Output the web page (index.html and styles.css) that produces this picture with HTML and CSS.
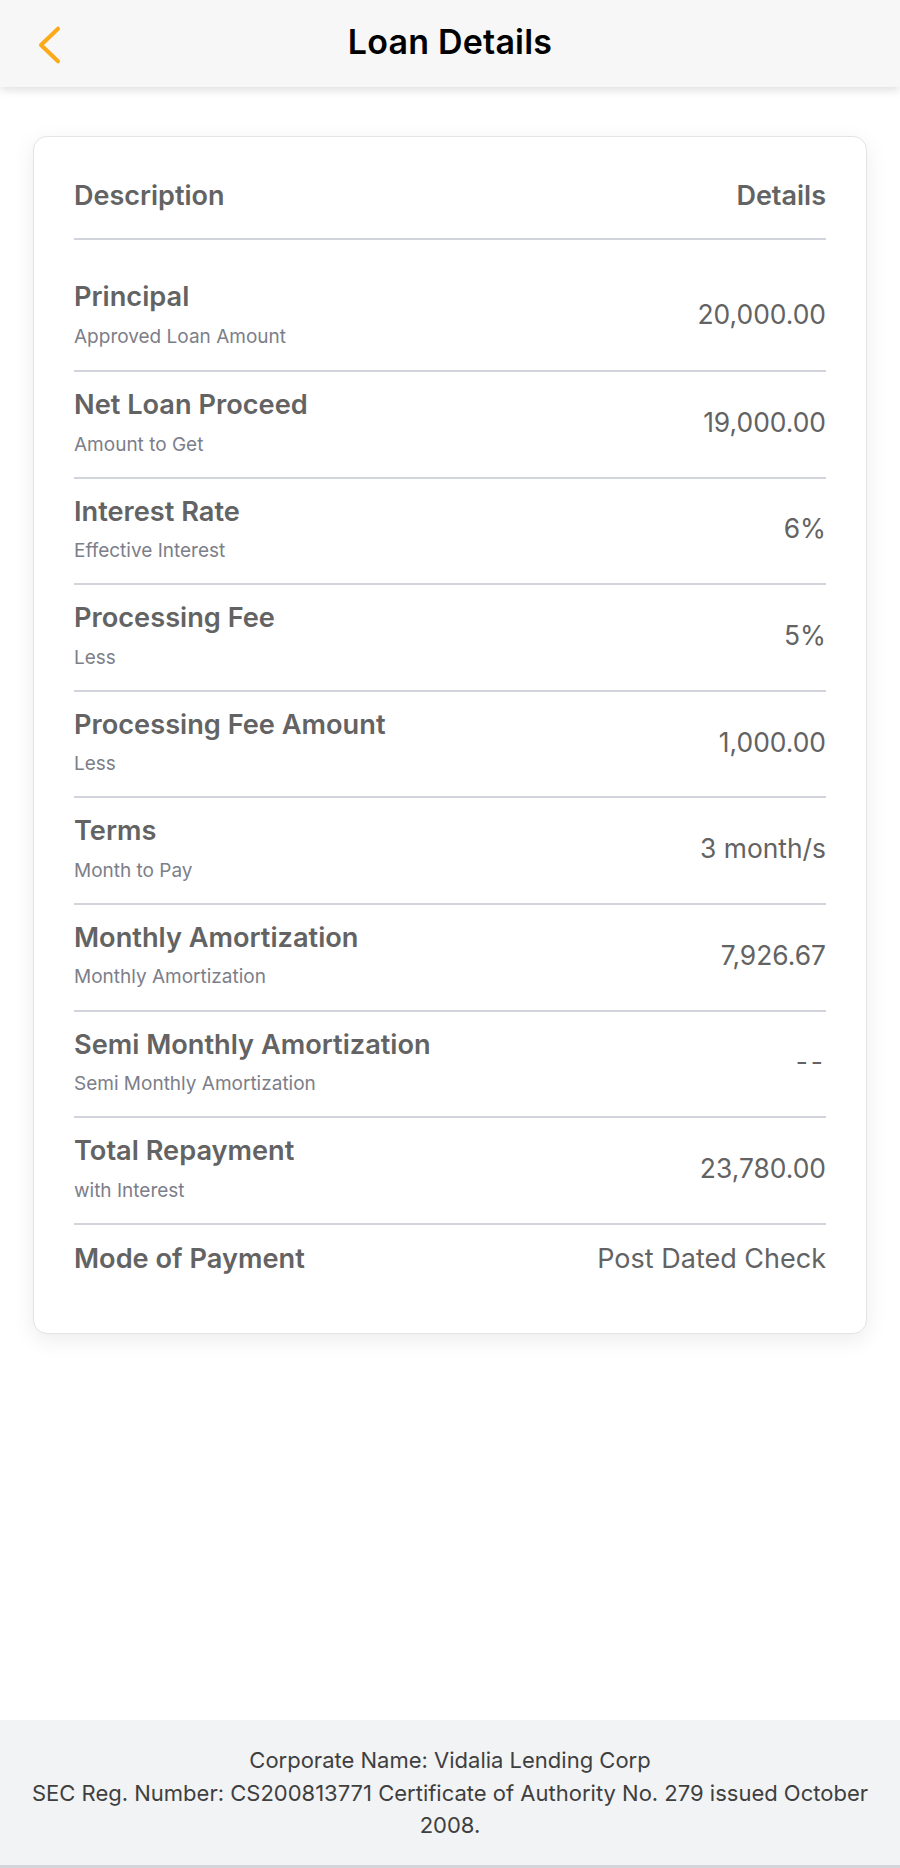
FILE: index.html
```html
<!DOCTYPE html>
<html lang="en">
<head>
<meta charset="utf-8">
<title>Loan Details</title>
<link rel="stylesheet" href="styles.css">
</head>
<body>
<header class="topbar">
  <div class="topbar-side">
    <button class="back" aria-label="Back">
      <svg width="26" height="40" viewBox="0 0 26 40" aria-hidden="true">
        <path d="M22 3.7 L5 20 L22 36.3" fill="none" stroke="#fcaa1a" stroke-width="4" stroke-linecap="round" stroke-linejoin="round"/>
      </svg>
    </button>
  </div>
  <h1 class="title">Loan Details</h1>
  <div class="topbar-side"></div>
</header>

<main class="content">
  <section class="card">
    <div class="card-head">
      <span>Description</span>
      <span>Details</span>
    </div>

    <div class="row row-first">
      <div class="desc"><div class="label">Principal</div><div class="sub">Approved Loan Amount</div></div>
      <div class="value">20,000.00</div>
    </div>
    <div class="row">
      <div class="desc"><div class="label">Net Loan Proceed</div><div class="sub">Amount to Get</div></div>
      <div class="value">19,000.00</div>
    </div>
    <div class="row">
      <div class="desc"><div class="label">Interest Rate</div><div class="sub">Effective Interest</div></div>
      <div class="value">6%</div>
    </div>
    <div class="row">
      <div class="desc"><div class="label">Processing Fee</div><div class="sub">Less</div></div>
      <div class="value">5%</div>
    </div>
    <div class="row">
      <div class="desc"><div class="label">Processing Fee Amount</div><div class="sub">Less</div></div>
      <div class="value">1,000.00</div>
    </div>
    <div class="row">
      <div class="desc"><div class="label">Terms</div><div class="sub">Month to Pay</div></div>
      <div class="value">3 month/s</div>
    </div>
    <div class="row">
      <div class="desc"><div class="label">Monthly Amortization</div><div class="sub">Monthly Amortization</div></div>
      <div class="value">7,926.67</div>
    </div>
    <div class="row">
      <div class="desc"><div class="label">Semi Monthly Amortization</div><div class="sub">Semi Monthly Amortization</div></div>
      <div class="value value-dash">--</div>
    </div>
    <div class="row">
      <div class="desc"><div class="label">Total Repayment</div><div class="sub">with Interest</div></div>
      <div class="value">23,780.00</div>
    </div>
    <div class="row row-last">
      <div class="label">Mode of Payment</div>
      <div class="value value-text">Post Dated Check</div>
    </div>
  </section>
</main>

<footer class="footer">
  <p>Corporate Name: Vidalia Lending Corp</p>
  <p>SEC Reg. Number: CS200813771 Certificate of Authority No. 279 issued October 2008.</p>
</footer>
</body>
</html>
```

FILE: styles.css
```css
* {
  box-sizing: border-box;
}

html, body {
  margin: 0;
  padding: 0;
}

body {
  min-height: 100vh;
  display: flex;
  flex-direction: column;
  background: #ffffff;
  font-family: "Inter", "Noto Sans", "Liberation Sans", sans-serif;
  color: #666666;
}

/* ---------- top bar ---------- */
.topbar {
  position: relative;
  z-index: 1;
  height: 87px;
  flex: 0 0 auto;
  display: grid;
  grid-template-columns: 1fr auto 1fr;
  align-items: center;
  padding-bottom: 3px;
  background: #f7f7f7;
  box-shadow: 0 3px 9px rgba(0, 0, 0, 0.13);
}

.topbar-side {
  display: flex;
  align-items: center;
}

.back {
  display: flex;
  margin: 5px 0 0 36px;
  padding: 0;
  border: 0;
  background: none;
  cursor: pointer;
}

.title {
  margin: 0;
  font-size: 34px;
  font-weight: 600;
  line-height: 40px;
  color: #000000;
  letter-spacing: 0.2px;
}

/* ---------- content ---------- */
.content {
  flex: 1 0 auto;
  padding: 49px 33px 0;
}

.card {
  background: #ffffff;
  border: 1px solid #e3e3e8;
  border-radius: 14px;
  box-shadow: 0 6px 22px rgba(0, 0, 0, 0.08);
  padding: 40.6px 40px 56px;
}

.card-head {
  display: flex;
  justify-content: space-between;
  font-size: 27px;
  font-weight: 600;
  line-height: 36px;
  color: #636363;
  padding-bottom: 24.6px;
  border-bottom: 2px solid #d2d4db;
}

.row {
  display: flex;
  justify-content: space-between;
  align-items: center;
  padding: 15px 0 20.2px;
  border-bottom: 2px solid #d2d4db;
}

.row-first {
  padding-top: 39px;
  padding-bottom: 21.6px;
}

.row-last {
  border-bottom: 0;
  padding-top: 16px;
  padding-bottom: 0;
}

.desc {
  display: flex;
  flex-direction: column;
  gap: 9.4px;
}

.label {
  font-size: 27.2px;
  font-weight: 600;
  line-height: 36px;
  color: #636363;
}

.sub {
  font-size: 19px;
  font-weight: 400;
  line-height: 24px;
  color: #7c7e89;
}

.value {
  font-size: 26.4px;
  font-weight: 400;
  line-height: 36px;
  color: #636363;
  text-align: right;
}

.value-text {
  font-size: 27px;
}

.value-dash {
  letter-spacing: 3px;
}

/* ---------- footer ---------- */
.footer {
  flex: 0 0 auto;
  background: #f2f3f5;
  border-bottom: 3px solid #d3d5da;
  padding: 24px 24px 23.6px;
  text-align: center;
  font-size: 22px;
  line-height: 32.4px;
  color: #3f3f3f;
}

.footer p {
  margin: 0;
}
```
